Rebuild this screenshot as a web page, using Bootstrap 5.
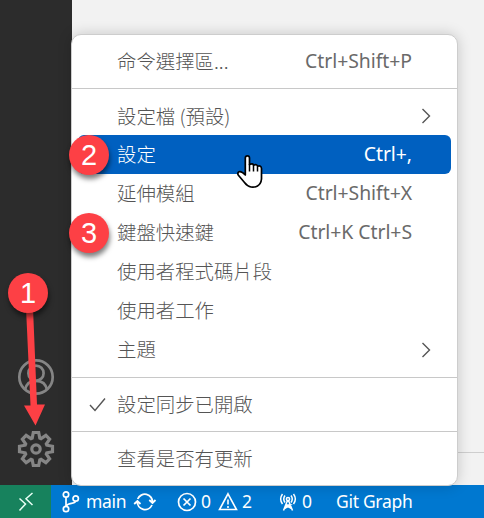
<!DOCTYPE html>
<html lang="zh-Hant">
<head>
<meta charset="utf-8">
<meta name="viewport" content="width=device-width, initial-scale=1">
<title>設定</title>
<link href="https://cdn.jsdelivr.net/npm/bootstrap@5.3.0/dist/css/bootstrap.min.css" rel="stylesheet">
<style>
body{height:518px;overflow:hidden;background:#f2f2f2;font-family:"Noto Sans","Noto Sans CJK TC",sans-serif}
.activity{width:72px;background:#2c2c2c;padding-bottom:17px;gap:34px}
.activity svg{display:block}
.panel-edge{height:33px;border-top:1px solid #cecece}
.status{height:33px;background:#0078d0;color:#fff;font-size:17.5px;line-height:33px;white-space:nowrap}
.status svg{display:block;flex:none}
.remote{width:51px;background:#17825d}
.branch{width:39px;margin-left:3px;letter-spacing:-.3px}
.sync{margin-left:8px}
.err{margin-left:20px}
.count{width:11px;margin-left:4px}
.warn{margin-left:6px}
.radio{margin-left:25px}
.graph{margin-left:23px;letter-spacing:-.3px}
.ctx-menu{left:71px;top:34px;width:387px;height:452px;border:1px solid #cdcdcd;border-radius:10px;background:#fff;color:#6a6a6a;box-shadow:0 0 14px rgba(0,0,0,.18);padding:7px 0;font-size:19.4px}
.ctx-menu hr{margin:7px 0;border:0;border-top:1px solid #c8c8c8;opacity:1}
.ctx-menu hr.after-sub{margin-top:8px}
.ctx-item{height:39px;line-height:37px;margin:0 6px;padding:0 39px 0 39px;border-radius:6px;white-space:nowrap}
.ctx-item.chosen{background:#0060c0;color:#fff}
.ctx-label{font-family:"Noto Sans CJK TC",sans-serif;font-weight:300;color:#555}
.chosen .ctx-label{color:#fff}
.ctx-key{line-height:38px;letter-spacing:-.05px}
.ctx-item.has-sub{padding-right:20px}
.ctx-item.checked{padding-left:11px}
.tick{margin-right:11px}
.step{width:40px;height:40px;border-radius:50%;background:#fd4045;color:#fff;font:29px/41px "Liberation Sans",Arial,sans-serif;text-align:center;box-shadow:1px 4px 5px rgba(0,0,0,.5)}
.step-1{left:8px;top:273px}
.step-2{left:69px;top:135px}
.step-3{left:69px;top:213px}
.arrow{left:15px;top:300px}
.pointer{left:235px;top:153px}
</style>
<script src="https://cdn.jsdelivr.net/npm/bootstrap@5.3.0/dist/js/bootstrap.bundle.min.js"></script>
</head>
<body class="d-flex flex-column position-relative">
<div class="d-flex flex-grow-1">
  <nav class="activity d-flex flex-column justify-content-end align-items-center">
    <svg width="38" height="38" viewBox="0 0 38 38" fill="none" stroke="#858585" stroke-width="2.700"><circle cx="19" cy="19" r="16.700"/><circle cx="19" cy="15.200" r="7.600"/><path d="M8 32c1-6 4-9.200 11-9.200s10 3.200 11 9.200"/></svg>
    <svg width="38" height="38" viewBox="-19 -19 38 38" fill="none" stroke="#858585" stroke-width="3.200"><path d="M-3.800-10.800L-2.700-16.500H2.700L3.800-10.800L5-10.300L9.900-13.600L13.600-9.900L10.300-5L10.800-3.800L16.500-2.700V2.700L10.800 3.800L10.300 5L13.600 9.900L9.900 13.600L5 10.300L3.800 10.800L2.700 16.500H-2.700L-3.800 10.800L-5 10.300L-9.900 13.600L-13.600 9.900L-10.300 5L-10.800 3.800L-16.500 2.700V-2.700L-10.800-3.800L-10.300-5L-13.600-9.900L-9.900-13.600L-5-10.300Z"/><circle r="4.200"/></svg>
  </nav>
  <main class="flex-grow-1 d-flex flex-column justify-content-end"><div class="panel-edge"></div></main>
</div>
<footer class="status d-flex align-items-center">
  <div class="remote d-flex h-100 align-items-center justify-content-center"><svg width="16" height="20" viewBox="0 0 16 20" fill="none" stroke="#e8fff5" stroke-width="1.500"><path d="M1.500 6.500L7.500 12L1.500 18.500M14.500 1L8 6.800L14.500 13"/></svg></div>
  <svg class="ms-2" width="24" height="24" viewBox="0 0 24 24" fill="none" stroke="#fff" stroke-width="1.700"><circle cx="7" cy="4.500" r="2.700"/><circle cx="7" cy="19" r="2.700"/><circle cx="16.700" cy="8.500" r="2.700"/><path d="M7 7.200V16.300M16.500 11.200C15.500 14.500 9 12 7.300 16"/></svg>
  <span class="branch">main</span>
  <svg class="sync" width="24" height="22" viewBox="0 0 24 22" fill="none" stroke="#fff" stroke-width="1.800"><path d="M4.700 8A7.700 7.700 0 0 1 19.500 11.500M19 14A7.700 7.700 0 0 1 4.300 10.500M1.200 13L4.400 10L7.500 13M16.300 9L19.500 12L22.500 9"/></svg>
  <svg class="err" width="20" height="20" viewBox="0 0 20 20" fill="none" stroke="#fff" stroke-width="1.700"><circle cx="10" cy="10" r="8.500"/><path d="M6.500 6.500L13.500 13.500M13.500 6.500L6.500 13.500"/></svg>
  <span class="count">0</span>
  <svg class="warn" width="20" height="20" viewBox="0 0 20 20" fill="none" stroke="#fff" stroke-width="1.600"><path d="M10 1.800L18.500 17.500H1.500Z"/><path d="M10 7.500V12.500M10 14V16"/></svg>
  <span class="count">2</span>
  <svg class="radio" width="20" height="20" viewBox="0 0 20 20" fill="none" stroke="#fff" stroke-width="1.500"><circle cx="10" cy="7" r="1.600"/><path d="M9.500 8.500L5.500 18.500M10.500 8.500L14.500 18.500M7.800 13H12.200L6.500 16.500M7.800 13L13.500 16.500M7 10.500Q4.500 7 7 3.500M13 10.500Q15.500 7 13 3.500M4.500 12Q.8 7 4.500 2M15.500 12Q19.200 7 15.500 2"/></svg>
  <span class="count">0</span>
  <span class="graph">Git Graph</span>
</footer>
<div class="ctx-menu position-absolute">
  <div class="ctx-item d-flex justify-content-between"><span class="ctx-label">命令選擇區...</span><span class="ctx-key">Ctrl+Shift+P</span></div>
  <hr>
  <div class="ctx-item has-sub d-flex justify-content-between align-items-center"><span class="ctx-label">設定檔 (預設)</span><svg width="10" height="16" viewBox="0 0 10 16" fill="none" stroke="#555" stroke-width="1.400"><path d="M1.500 1L8.500 8L1.500 15"/></svg></div>
  <div class="ctx-item chosen d-flex justify-content-between"><span class="ctx-label">設定</span><span class="ctx-key">Ctrl+,</span></div>
  <div class="ctx-item d-flex justify-content-between"><span class="ctx-label">延伸模組</span><span class="ctx-key">Ctrl+Shift+X</span></div>
  <div class="ctx-item d-flex justify-content-between"><span class="ctx-label">鍵盤快速鍵</span><span class="ctx-key">Ctrl+K Ctrl+S</span></div>
  <div class="ctx-item"><span class="ctx-label">使用者程式碼片段</span></div>
  <div class="ctx-item"><span class="ctx-label">使用者工作</span></div>
  <div class="ctx-item has-sub d-flex justify-content-between"><span class="ctx-label">主題</span><svg class="align-self-center" width="10" height="16" viewBox="0 0 10 16" fill="none" stroke="#555" stroke-width="1.400"><path d="M1.500 1L8.500 8L1.500 15"/></svg></div>
  <hr class="after-sub">
  <div class="ctx-item checked d-flex"><svg class="tick align-self-center" width="17" height="16" viewBox="0 0 17 16" fill="none" stroke="#555" stroke-width="1.400"><path d="M1 8L6 13.500L16 1.500"/></svg><span class="ctx-label">設定同步已開啟</span></div>
  <hr>
  <div class="ctx-item"><span class="ctx-label">查看是否有更新</span></div>
</div>
<svg class="arrow position-absolute" width="40" height="130" viewBox="0 0 40 130"><path fill="#fd4045" d="M11 8H18L22 104.500H30L20.500 125.500L9 105.500H15.500Z"/></svg>
<div class="step step-1 position-absolute">1</div>
<div class="step step-2 position-absolute">2</div>
<div class="step step-3 position-absolute">3</div>
<svg class="pointer position-absolute" width="30" height="36" viewBox="0 0 30 36"><path d="M10.300 22V5Q10.300 2.800 12.400 2.800T14.500 5V11.500Q18 10 18.500 12.200Q22 10.800 22.500 13.200Q26.300 12 26.500 15.500V26Q26 31 22.500 33Q20 34.500 16 34Q12.500 33.500 9.500 29.500L3.200 22Q2.200 19.800 4 18.800Q6.500 18 10.300 22Z" fill="#fff" stroke="#000" stroke-width="1.700" stroke-linejoin="round"/><path d="M14.500 11V18.500M18.500 12.500V18.500M22.500 13.500V18.500" stroke="#000" stroke-width="1.500"/></svg>
</body>
</html>
